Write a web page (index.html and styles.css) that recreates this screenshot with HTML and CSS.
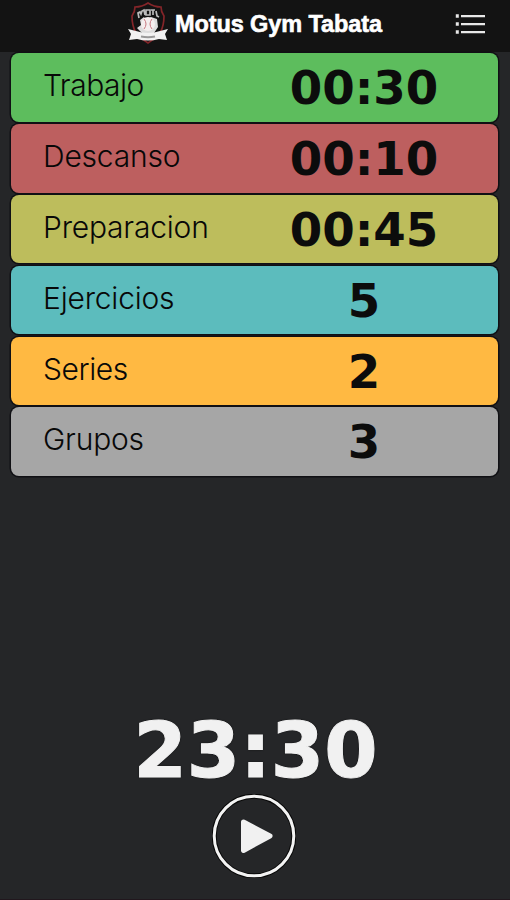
FILE: index.html
```html
<!DOCTYPE html>
<html lang="es">
<head>
<meta charset="utf-8">
<title>Motus Gym Tabata</title>
<link rel="stylesheet" href="styles.css">
</head>
<body>
<header class="header">
  <svg class="logo" viewBox="0 0 40 42" aria-hidden="true">
    <path d="M20 1Q14 5 7 5Q7 10 4 14Q4 24 8 31Q13 37 20 41Q27 37 32 31Q36 24 36 14Q33 10 33 5Q26 5 20 1Z" fill="#131313" stroke="#842529" stroke-width="1.7"/>
    <path d="M11 16l-1-5 2-1 1 2 1-3 2-1 1 5M18 8h4v5h-4zM23 8h4M25 8v5M28 9l1 5 2 1" fill="none" stroke="#bbb" stroke-width="1.7"/>
    <path d="M12 18l4-3 2 3 5-3 6 2 1 8-4 6H14l-5-5 4-3z" fill="#ddd"/>
    <circle cx="20" cy="22" r="7" fill="#f4eeee"/>
    <path d="M16 17q4 5 0 10M24 17q-4 5 0 10" fill="none" stroke="#c87880" stroke-width="1"/>
    <path d="M0 27l8 2q12 4 24 0l8-2-3 5 2 6-8-1q-11 3-22 0l-8 1 2-6z" fill="#f2f2f2"/>
    <path d="M13 34.500q7 1.500 14 0" fill="none" stroke="#999" stroke-width="2"/>
  </svg>
  <h1 class="title">Motus Gym Tabata</h1>
  <svg class="menu" viewBox="0 0 30 22" aria-hidden="true">
    <path d="M.8 1.200h3v3.500h-3zM.8 9.200h3v3.500h-3zM.8 17.200h3v3.500h-3zM6 2H30v2.200H6zM6 10H30v2.200H6zM6 18H30v2.200H6z" fill="#e8e8e8"/>
  </svg>
</header>
<main class="main">
  <section class="settings">
    <div class="row work"><span class="label">Trabajo</span><span class="value">00:30</span></div>
    <div class="row rest"><span class="label">Descanso</span><span class="value">00:10</span></div>
    <div class="row prep"><span class="label">Preparacion</span><span class="value">00:45</span></div>
    <div class="row exercises"><span class="label">Ejercicios</span><span class="value">5</span></div>
    <div class="row series"><span class="label">Series</span><span class="value">2</span></div>
    <div class="row groups"><span class="label">Grupos</span><span class="value">3</span></div>
  </section>
  <section class="timer">
    <div class="total">23:30</div>
    <svg class="play" viewBox="0 0 84 84" aria-hidden="true">
      <circle cx="42" cy="42" r="39.8" fill="none" stroke="#080808" stroke-width="5"/>
      <circle cx="42" cy="42" r="39.8" fill="none" stroke="#f3f3f3" stroke-width="3"/>
      <path d="M31.500 28L58 42 31.500 56.500z" fill="#f1f1f1" stroke="#f1f1f1" stroke-width="5" stroke-linejoin="round"/>
    </svg>
  </section>
</main>
</body>
</html>
```
FILE: styles.css
```css
* { box-sizing: border-box; }
body {
  margin: 0;
  height: 900px;
  display: flex;
  flex-direction: column;
  background: #252628;
  border-bottom: 1px solid #21171d;
  font-family: Inter, "Liberation Sans", sans-serif;
}
.header {
  height: 52px;
  display: grid;
  grid-template-columns: 40px 1fr 30px;
  column-gap: 7px;
  padding: 2px 25px 0 128px;
  background: #131313;
}
.logo { width: 40px; height: 42px; }
.title {
  margin: 7px 0 0;
  color: #fff;
  font: bold 23.5px/30px "Liberation Sans", sans-serif;
  letter-spacing: -0.1px;
  white-space: nowrap;
  -webkit-text-stroke: 0.6px #fff;
}
.menu { width: 30px; height: 22px; margin-top: 11px; }
.main {
  flex: 1;
  display: flex;
  flex-direction: column;
  justify-content: space-between;
  padding: 1.4px 12px 21px 11px;
}
.settings { display: flex; flex-direction: column; gap: 2.4px; }
.row {
  height: 68.4px;
  display: grid;
  grid-template-columns: 220px 1fr;
  padding: 0 1px 0 32px;
  border-radius: 8px;
  box-shadow: 0 0 0 1.5px #101014;
}
.label {
  font-size: 30px;
  font-weight: 280;
  line-height: 65px;
  letter-spacing: -0.2px;
  color: #080808;
}
.work .label { letter-spacing: -0.5px; }
.series .label { letter-spacing: -0.4px; }
.value {
  padding-right: 32px;
  font: bold 46.7px/71px "DejaVu Sans", sans-serif;
  text-align: center;
  color: #0c0c0c;
}
.work { background: #5dbd5d; }
.rest { background: #bd5f5f; }
.prep { background: #bdbd5c; }
.exercises { background: #5cbcbd; }
.series { background: #ffb942; }
.groups { background: #a6a6a6; }
.timer { display: flex; flex-direction: column; align-items: center; padding-right: 1px; }
.total {
  padding: 2px 0 0 3px;
  margin-bottom: -2px;
  font: bold 76.7px/90px "DejaVu Sans", sans-serif;
  color: #f1f1f1;
  text-shadow: 0 0 2px #000;
  -webkit-text-stroke: 1px #f1f1f1;
}
.play { width: 84px; height: 84px; }
```
